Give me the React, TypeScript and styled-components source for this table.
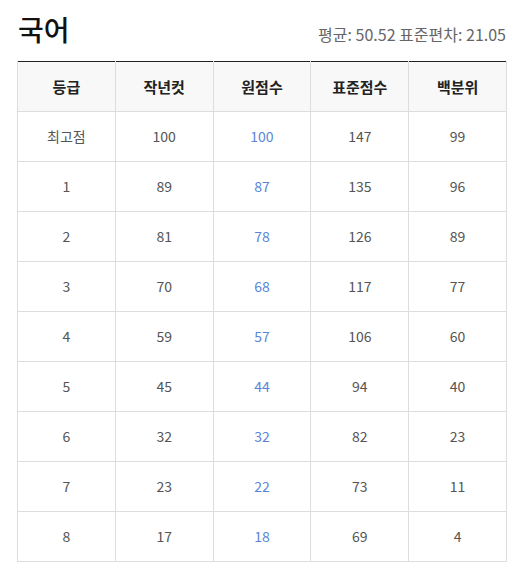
import React from "react"
import styled, { createGlobalStyle } from "styled-components"

const GlobalStyle = createGlobalStyle`
  body {
    margin: 0;
    background: #fff;
    font-family: "Noto Sans CJK KR", "Noto Sans", sans-serif;
  }
`

const Page = styled.div`
  padding: 9px 2px 16px 17px;
`

const TitleBar = styled.div`
  display: flex;
  justify-content: space-between;
  align-items: flex-end;
  padding: 0 1px 12px 1px;
`

const Title = styled.h2`
  margin: 0;
  font-size: 28px;
  font-weight: 500;
  color: #111;
  line-height: 40px;
`

const Stats = styled.span`
  font-size: 16px;
  color: #666;
  line-height: 22px;
  margin-bottom: 4px;
`

const Table = styled.table`
  width: 490px;
  border-collapse: collapse;
  table-layout: fixed;
  border-top: 1px solid #222;
`

const Th = styled.th`
  height: 48px;
  background: #f8f8f8;
  border: 1px solid #ddd;
  border-top: none;
  font-size: 15px;
  font-weight: 700;
  color: #222;
  text-align: center;
  padding: 0 0 1px;
`

const Td = styled.td<{ $blue?: boolean }>`
  height: 47px;
  border: 1px solid #ddd;
  font-size: 14px;
  color: ${(p) => (p.$blue ? "#5a86d8" : "#555")};
  text-align: center;
  padding: 0 0 2px;
`

const rows = [
  ["최고점", 100, 100, 147, 99],
  [1, 89, 87, 135, 96],
  [2, 81, 78, 126, 89],
  [3, 70, 68, 117, 77],
  [4, 59, 57, 106, 60],
  [5, 45, 44, 94, 40],
  [6, 32, 32, 82, 23],
  [7, 23, 22, 73, 11],
  [8, 17, 18, 69, 4],
]

const heads = ["등급", "작년컷", "원점수", "표준점수", "백분위"]

export default function App() {
  return (
    <>
      <GlobalStyle />
      <Page>
        <TitleBar>
          <Title>국어</Title>
          <Stats>평균: 50.52 표준편차: 21.05</Stats>
        </TitleBar>
        <Table>
          <thead>
            <tr>
              {heads.map((h) => (
                <Th key={h}>{h}</Th>
              ))}
            </tr>
          </thead>
          <tbody>
            {rows.map((r, i) => (
              <tr key={i}>
                {r.map((v, j) => (
                  <Td key={j} $blue={j === 2}>
                    {v}
                  </Td>
                ))}
              </tr>
            ))}
          </tbody>
        </Table>
      </Page>
    </>
  )
}
